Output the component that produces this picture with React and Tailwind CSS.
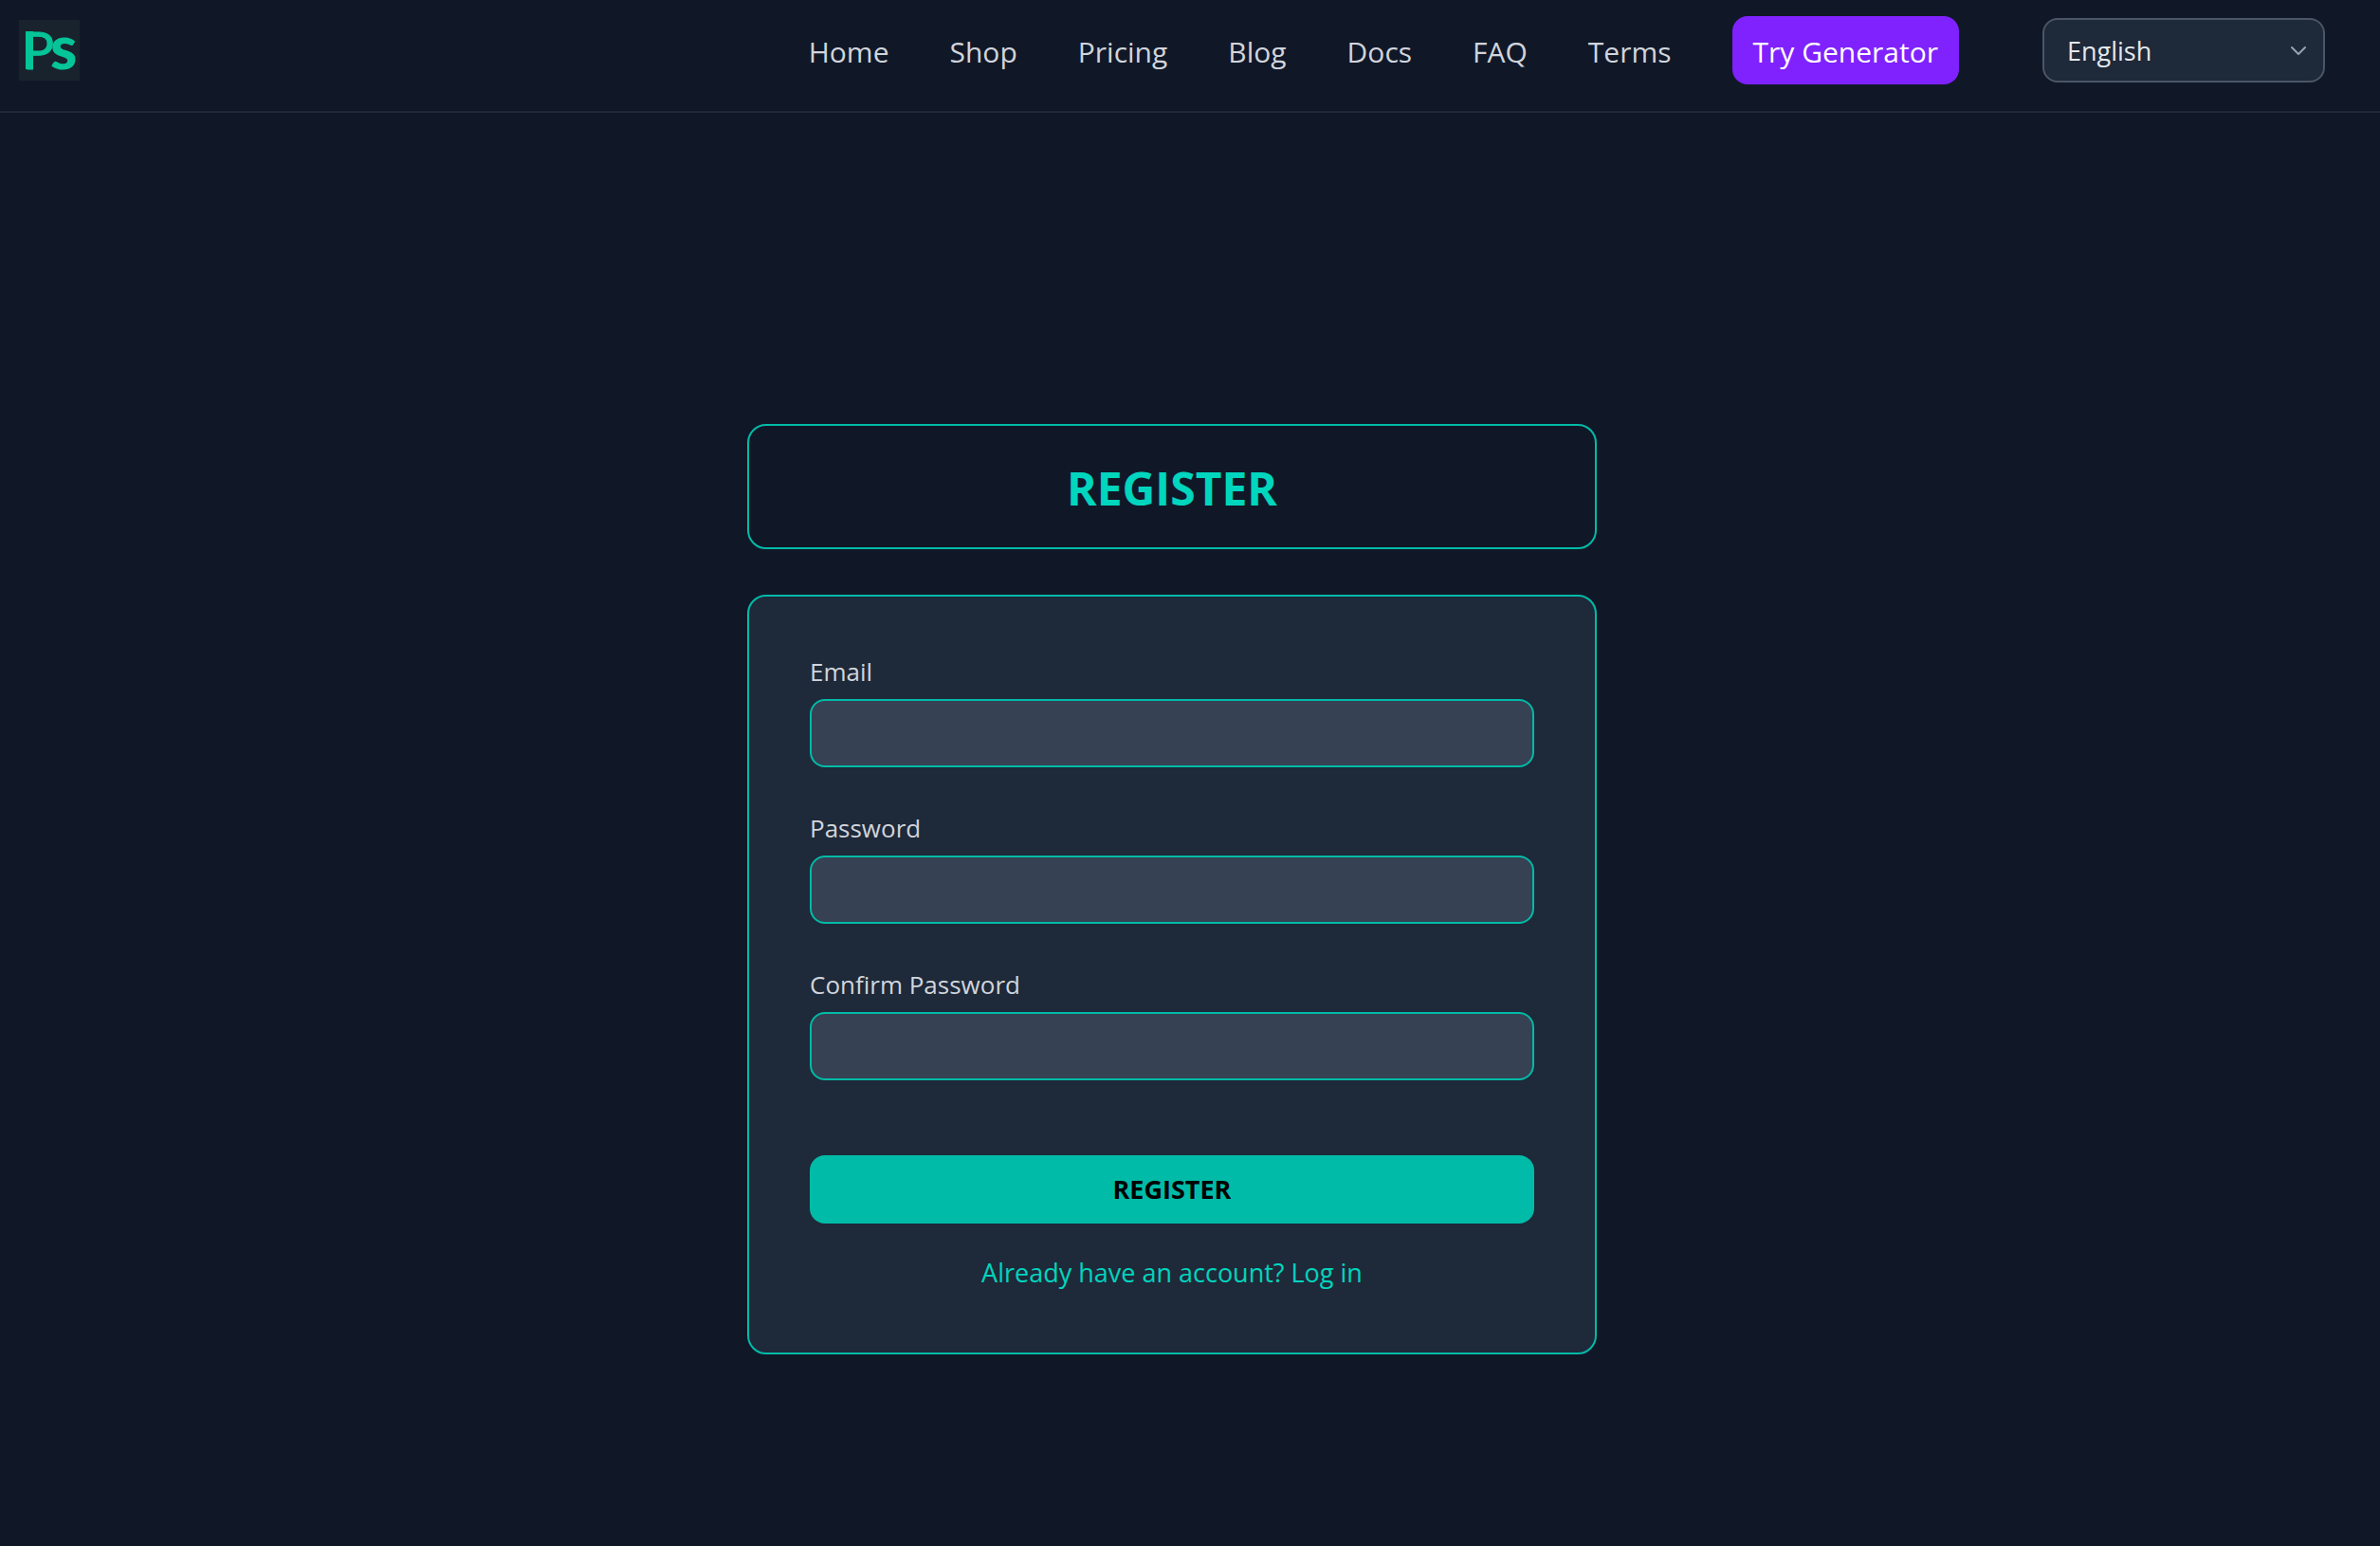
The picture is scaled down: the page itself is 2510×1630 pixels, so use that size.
import { useState } from 'react';

const NAV_LINKS = ['Home', 'Shop', 'Pricing', 'Blog', 'Docs', 'FAQ', 'Terms'];

const LANGUAGES = ['English', 'Deutsch', 'Français', 'Español'];

function Logo() {
  return (
    <a href="#home" aria-label="Ps" className="flex-shrink-0">
      <svg className="w-16 h-16 block overflow-visible" viewBox="0 0 64 64">
        <rect width="64" height="64" fill="#19232d" />
        <g fill="#05c498" fontFamily="Lato, sans-serif" className="blur-[0.5px]">
          <rect x="7" y="12" width="8" height="40" />
          <text x="4" y="52" fontSize="55" stroke="#05c498" strokeWidth="1">P</text>
          <text x="33" y="52" fontSize="64" fontWeight="900">s</text>
        </g>
      </svg>
    </a>
  );
}

/* ── Top bar ── */
function Header() {
  const [language, setLanguage] = useState('English');

  return (
    <header className="flex items-center justify-between pl-5 pr-[58px] pt-[17px] pb-7 border-b-2 border-gray-800">
      <Logo />
      <div className="flex items-center gap-[88px]">
        <nav className="flex items-center gap-16 text-[30px] leading-[48px] text-gray-300">
          {NAV_LINKS.map((label) => (
            <a key={label} href={`#${label.toLowerCase()}`} className="pt-1 hover:text-white transition-colors">
              {label}
            </a>
          ))}
          <a href="#generator" className="px-[22px] pt-[14px] pb-[10px] rounded-2xl bg-violet-600 text-white">
            Try Generator
          </a>
        </nav>
        <div className="relative">
          <select
            aria-label="Language"
            value={language}
            onChange={(e) => setLanguage(e.target.value)}
            className="appearance-none block w-[298px] h-[68px] pl-6 pr-16 pt-[2px] rounded-2xl border-2 border-gray-600 bg-gray-800 text-gray-200 text-[27px]"
          >
            {LANGUAGES.map((name) => (
              <option key={name}>{name}</option>
            ))}
          </select>
          <svg
            className="absolute right-5 top-[26px] w-4 h-4 pointer-events-none text-gray-400"
            viewBox="0 0 16 16" fill="none" stroke="currentColor"
          >
            <path strokeLinecap="round" strokeLinejoin="round" strokeWidth={2} d="M1 5l7 7 7-7" />
          </svg>
        </div>
      </div>
    </header>
  );
}

function Field({ id, label, type }) {
  return (
    <div>
      <label htmlFor={id} className="block mb-[14px] leading-[30px] text-[26px] text-gray-300">{label}</label>
      <input
        id={id}
        type={type}
        className="block w-full h-[72px] px-6 rounded-2xl border-2 border-teal-500 bg-gray-700 text-white focus:outline-none focus:border-teal-400"
      />
    </div>
  );
}

export default function App() {
  return (
    <div className="min-h-screen flex flex-col bg-gray-900 font-['Open_Sans','Noto_Sans',sans-serif]">
      <Header />
      <main className="flex-1 flex justify-center pt-[328px] pr-[38px]">
        <div className="w-full max-w-4xl">
          <div className="px-8 pt-[34px] pb-[30px] mb-12 rounded-[20px] border-2 border-teal-500">
            <h1 className="text-[48px] leading-[64px] font-bold text-center text-teal-400">REGISTER</h1>
          </div>

          <form
            onSubmit={(e) => e.preventDefault()}
            className="p-16 rounded-[20px] border-2 border-teal-500 bg-gray-800 text-[27px] leading-10"
          >
            <div className="space-y-[49px]">
              <Field id="email" label="Email" type="email" />
              <Field id="password" label="Password" type="password" />
              <Field id="confirm" label="Confirm Password" type="password" />
            </div>
            <button type="submit" className="w-full h-[72px] mt-[79px] rounded-2xl bg-teal-500 hover:bg-teal-400 text-black font-bold">
              REGISTER
            </button>
            <p className="mt-8 text-center">
              <a href="#login" className="text-teal-400 hover:underline">Already have an account? Log in</a>
            </p>
          </form>
        </div>
      </main>
    </div>
  );
}
